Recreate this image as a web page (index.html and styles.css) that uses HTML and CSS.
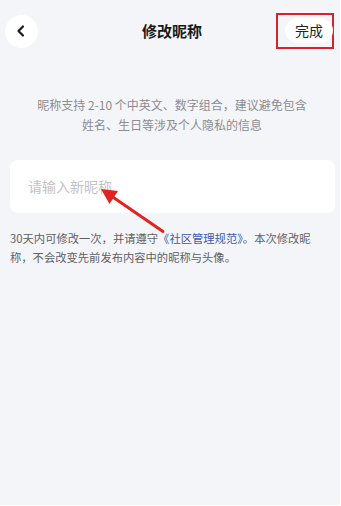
FILE: index.html
```html
<!DOCTYPE html>
<html lang="zh-CN">
<head>
<meta charset="utf-8">
<title>修改昵称</title>
<link rel="stylesheet" href="styles.css">
</head>
<body>
<div class="page">
  <header class="header">
    <div class="back">
      <svg width="14" height="14" viewBox="0 0 14 14"><path d="M9 2.5 L4.5 7 L9 11.5" fill="none" stroke="#1a1a1a" stroke-width="2.2" stroke-linecap="round" stroke-linejoin="round"/></svg>
    </div>
    <div class="title">修改昵称</div>
    <div class="done-wrap">
      <div class="mark">
        <div class="done">完成</div>
      </div>
    </div>
  </header>
  <p class="desc">昵称支持 2-10 个中英文、数字组合，建议避免包含<br>姓名、生日等涉及个人隐私的信息</p>
  <div class="input">请输入新昵称</div>
  <p class="notice">30天内可修改一次，并请遵守<span class="link">《社区管理规范》</span>。本次修改昵<br>称，不会改变先前发布内容中的昵称与头像。</p>
  <svg class="arrow" width="340" height="505" viewBox="0 0 340 505">
    <line x1="163" y1="231.5" x2="112" y2="196.5" stroke="#e32222" stroke-width="3" stroke-linecap="round"/>
    <polygon points="101,189 118,191 109.5,204" fill="#e32222"/>
  </svg>
</div>
</body>
</html>
```
FILE: styles.css
```css
* { box-sizing: border-box; }
html, body { margin: 0; padding: 0; background: #ffffff; }
body {
  font-family: "Noto Sans CJK SC", "Noto Sans", sans-serif;
}
.page {
  position: relative;
  width: 340px;
  height: 505px;
  background: #f4f5f9;
  overflow: hidden;
}
.header {
  display: grid;
  grid-template-columns: 1fr auto 1fr;
  align-items: center;
  padding: 13px 6px 0 5px;
  height: 49px;
}
.back {
  width: 33px;
  height: 33px;
  border-radius: 50%;
  background: #ffffff;
  display: flex;
  align-items: center;
  justify-content: center;
}
.back svg { margin-left: -1px; }
.title {
  font-size: 15px;
  font-weight: 700;
  color: #1a1a1a;
  padding-left: 5px;
  line-height: 20px;
}
.done-wrap { display: flex; justify-content: flex-end; }
.mark {
  border: 2px solid #d7222b;
  padding: 3px 0 4px 7px;
  width: 58px;
  height: 36px;
}
.done {
  width: 48px;
  height: 25px;
  border-radius: 13px;
  background: #ffffff;
  font-size: 14px;
  line-height: 25px;
  text-align: center;
  color: #222;
}
.desc {
  margin: 46px 0 0 0;
  text-align: center;
  font-size: 12px;
  line-height: 20px;
  color: #8c8c91;
  padding-left: 4px;
}
.input {
  margin: 25px 5px 0 10px;
  height: 53px;
  border-radius: 8px;
  background: #ffffff;
  padding-left: 18px;
  font-size: 14px;
  line-height: 53px;
  color: #c3c3c7;
}
.notice {
  margin: 16px 0 0 0;
  padding: 0 10px;
  font-size: 11.3px;
  line-height: 19px;
  color: #5f5f64;
}
.link { color: #3b58b0; }
.arrow {
  position: absolute;
  left: 0;
  top: 0;
  pointer-events: none;
}
```
